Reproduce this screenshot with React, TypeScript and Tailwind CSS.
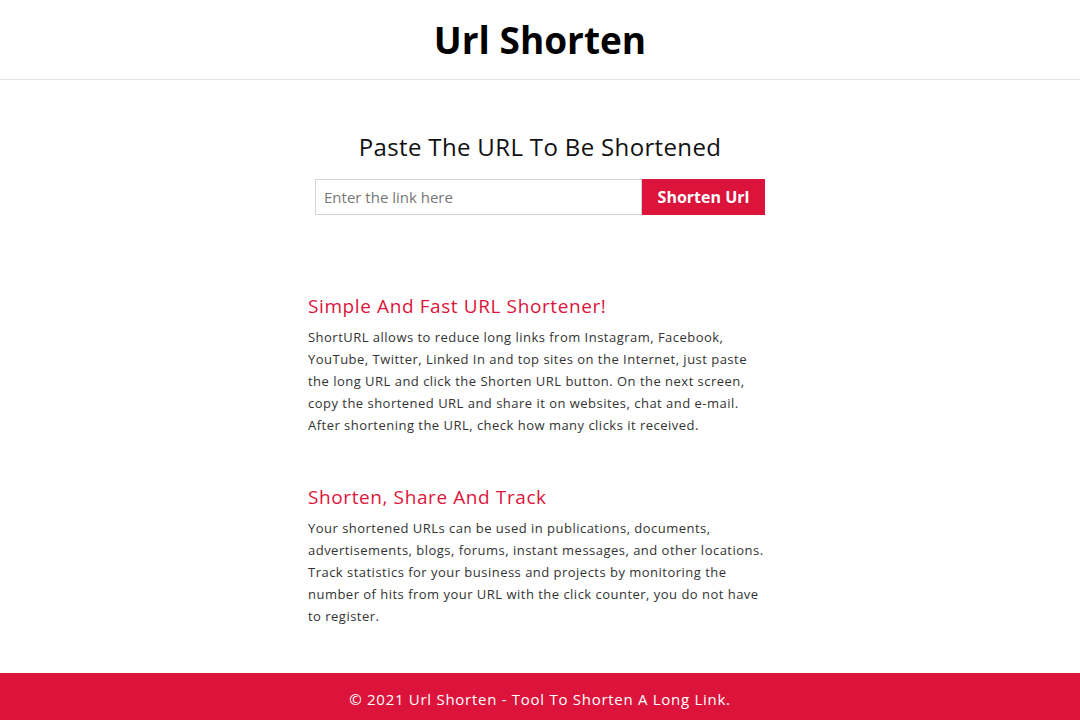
import React from "react";

const sections = [
  {
    title: "Simple And Fast URL Shortener!",
    body: "ShortURL allows to reduce long links from Instagram, Facebook, YouTube, Twitter, Linked In and top sites on the Internet, just paste the long URL and click the Shorten URL button. On the next screen, copy the shortened URL and share it on websites, chat and e-mail. After shortening the URL, check how many clicks it received.",
  },
  {
    title: "Shorten, Share And Track",
    body: "Your shortened URLs can be used in publications, documents, advertisements, blogs, forums, instant messages, and other locations. Track statistics for your business and projects by monitoring the number of hits from your URL with the click counter, you do not have to register.",
  },
];

export default function App() {
  return (
    <div className="min-h-[720px] flex flex-col bg-white font-['Open_Sans',sans-serif]">
      <header className="h-20 flex items-center justify-center border-b border-[#e5e5e5]">
        <h1 className="text-[37px] font-bold text-black">Url Shorten</h1>
      </header>

      <main className="flex-1 flex flex-col items-center">
        <h2 className="mt-[49px] text-[24px] leading-[36px] text-[#111] tracking-[0.35px]">
          Paste The URL To Be Shortened
        </h2>
        <form className="mt-[14px] flex" onSubmit={(e) => e.preventDefault()}>
          <input
            type="text"
            placeholder="Enter the link here"
            className="w-[327px] h-9 border border-[#d4d4d4] px-2 text-[15px] text-[#333] placeholder:text-[#777] outline-none"
          />
          <button
            type="submit"
            className="w-[123px] h-9 bg-[#dc143c] text-white text-[16px] font-bold"
          >
            Shorten Url
          </button>
        </form>

        <div className="w-[464px] mt-[77px] flex flex-col gap-[47px] pb-[40px]">
          {sections.map((s) => (
            <section key={s.title}>
              <h3 className="text-[19px] leading-[28px] text-[#dc143c] tracking-[0.6px]">{s.title}</h3>
              <p className="mt-[6px] text-[13px] leading-[22px] text-[#333] tracking-[0.48px]">{s.body}</p>
            </section>
          ))}
        </div>
      </main>

      <footer className="h-[47px] pt-[6px] bg-[#dc143c] flex items-center justify-center">
        <p className="text-[15px] text-white tracking-[0.72px]">© 2021 Url Shorten - Tool To Shorten A Long Link.</p>
      </footer>
    </div>
  );
}
